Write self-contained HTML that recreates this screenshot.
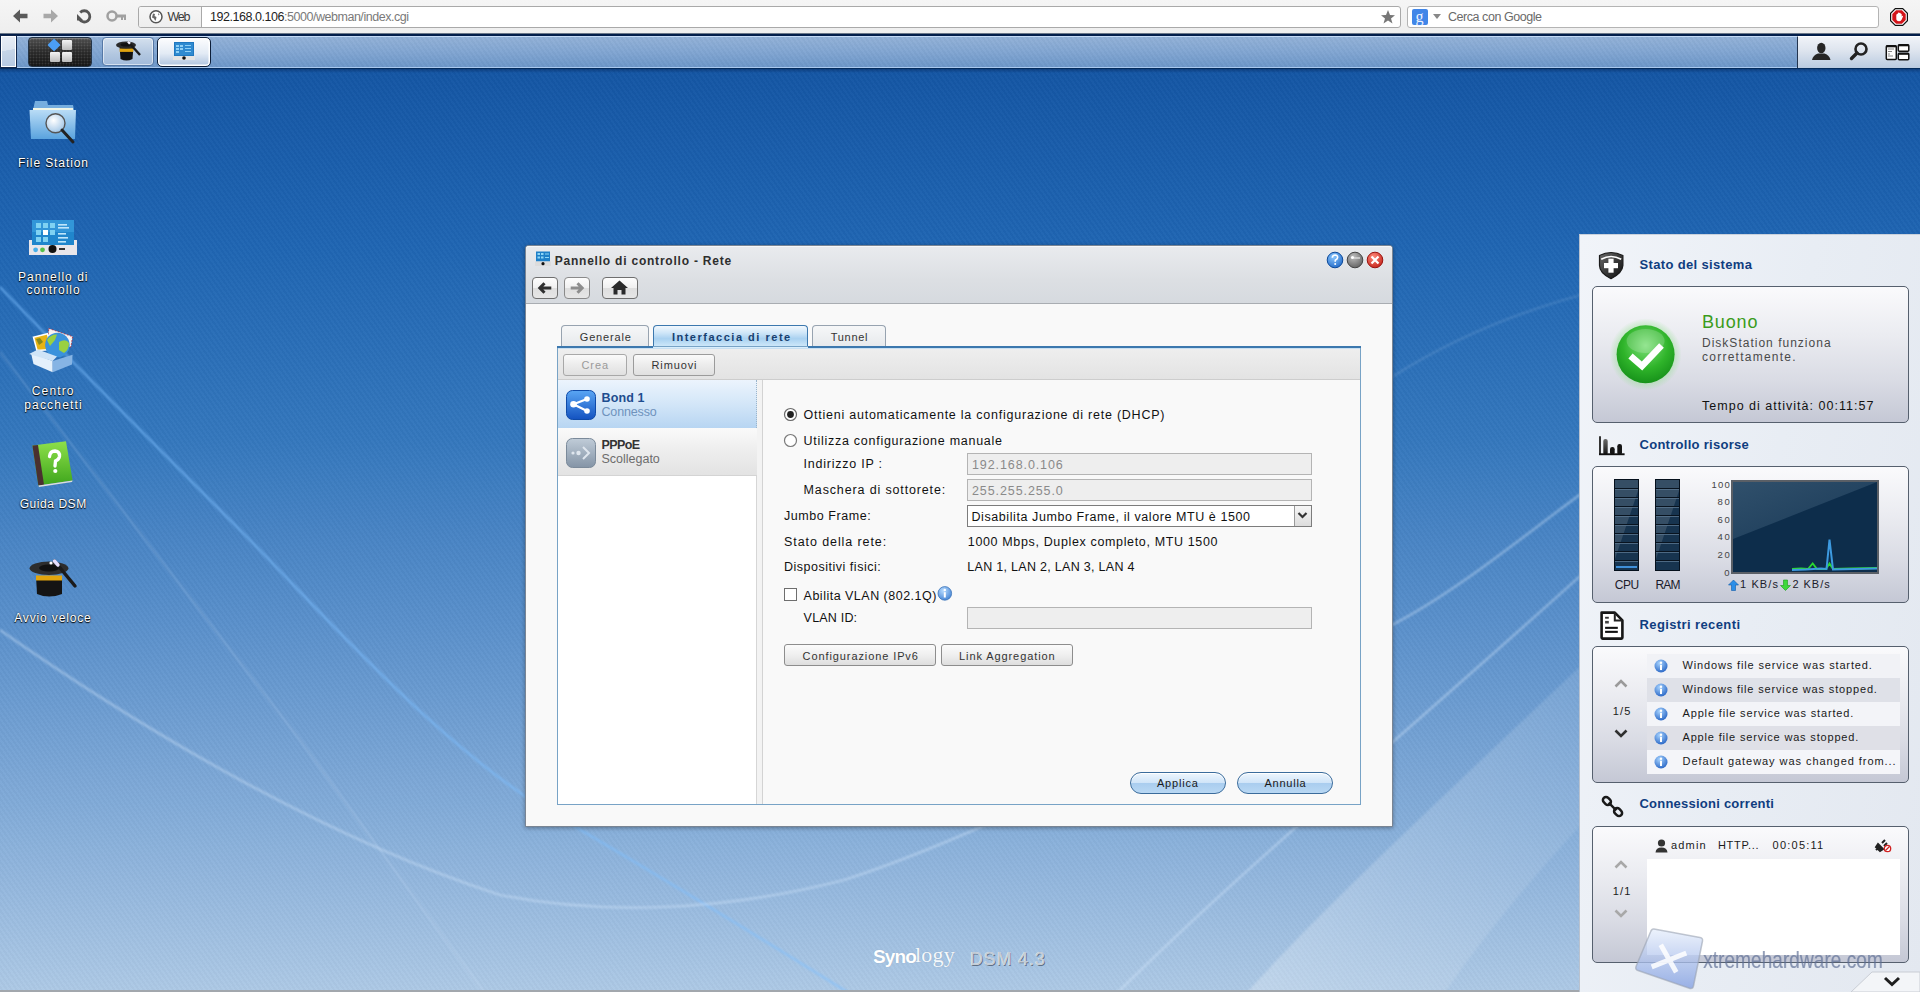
<!DOCTYPE html>
<html><head><meta charset="utf-8">
<style>

*{margin:0;padding:0;box-sizing:border-box}
html,body{width:1920px;height:992px;overflow:hidden;font-family:"Liberation Sans",sans-serif;}
body{position:relative;background:#1a5aa6;}
.a{position:absolute}
svg.a{overflow:visible}
.t{position:absolute;white-space:pre;line-height:1}
#desk{left:0;top:69px;width:1920px;height:923px;overflow:hidden;
 background:linear-gradient(180deg,#1456a4 0%,#2066b3 20%,#3477bd 40%,#5a90cb 60%,#82abd8 80%,#adc9e5 100%);}
#stripes{left:0;top:0;width:1920px;height:923px;
 background:repeating-linear-gradient(55deg,rgba(255,255,255,0.018) 0 2px,rgba(0,0,0,0.018) 2px 4px);}
#browser{left:0;top:0;width:1920px;height:34px;background:linear-gradient(#f5f5f5,#eeeeee);}
#taskbar{left:0;top:33px;width:1920px;height:36px;background:repeating-linear-gradient(55deg,rgba(255,255,255,.025) 0 2px,rgba(0,0,0,.02) 2px 4px),linear-gradient(#96b3d8,#82a6d2 50%,#6a95c8);}
.dl{color:#fff;text-shadow:0 1px 1px #000,0 0 2px rgba(0,0,0,.7)}

</style></head><body>
<div id="browser" class="a">
<svg class="a" style="left:10px;top:7px;" width="20" height="18" viewBox="0 0 20 18"><path d="M3 9 L10 2.5 L10 6.8 L17.5 6.8 L17.5 11.2 L10 11.2 L10 15.5 Z" fill="#5a5a5a"/></svg>
<svg class="a" style="left:41px;top:7px;" width="20" height="18" viewBox="0 0 20 18"><path d="M17 9 L10 2.5 L10 6.8 L2.5 6.8 L2.5 11.2 L10 11.2 L10 15.5 Z" fill="#a8a8a8"/></svg>
<svg class="a" style="left:75px;top:7px;" width="18" height="18" viewBox="0 0 18 18"><path d="M5.2 5.5 A5.6 5.6 0 1 1 4.6 12.5" fill="none" stroke="#555" stroke-width="2.8"/><path d="M2 13.5 L2 7 L8.5 13.5 Z" fill="#555"/></svg>
<svg class="a" style="left:106px;top:9px;" width="22" height="14" viewBox="0 0 22 14"><circle cx="6" cy="7" r="4.5" fill="none" stroke="#a0a0a0" stroke-width="2.5"/><rect x="10" y="5.5" width="10" height="3" fill="#a0a0a0"/><rect x="15" y="8" width="2" height="3" fill="#a0a0a0"/><rect x="18" y="8" width="2" height="3" fill="#a0a0a0"/></svg>
<div class="a" style="left:138px;top:6px;width:1263px;height:22px;background:#fff;border:1px solid #a9a9a9;border-radius:3px"></div>
<div class="a" style="left:139px;top:7px;width:63px;height:20px;background:linear-gradient(#f6f6f6,#eeeeee);border-right:1px solid #a9a9a9;border-radius:2px 0 0 2px"></div>
<svg class="a" style="left:149px;top:10px;" width="14" height="14" viewBox="0 0 14 14"><circle cx="7" cy="6.8" r="6" fill="#fff" stroke="#555" stroke-width="1.5"/><path d="M4 3.5 L6 4 L5.5 6 L7.5 7 L7 9.5 L6.2 11 L5 8.5 L3 7.5 Z M9 3 L10.5 4.5 L9.5 5.5 Z" fill="#6a6a6a"/></svg>
<span class="t" style="left:167.5px;top:11.02px;font-size:12.5px;color:#3a3a3a;letter-spacing:-1.242px;">Web</span>
<span class="t" style="left:210px;top:11.02px;font-size:12.5px;color:#1e1e1e;letter-spacing:-0.463px;">192.168.0.106<span style="color:#7a7a7a">:5000/webman/index.cgi</span></span>
<svg class="a" style="left:1380px;top:9px;" width="16" height="16" viewBox="0 0 16 16"><path d="M8 1 L10 6 L15 6.2 L11 9.5 L12.5 14.5 L8 11.5 L3.5 14.5 L5 9.5 L1 6.2 L6 6 Z" fill="#777"/></svg>
<div class="a" style="left:1407px;top:6px;width:472px;height:22px;background:#fff;border:1px solid #b4b4b4;border-radius:3px"></div>
<div class="a" style="left:1412px;top:9px;width:16px;height:16px;background:#4186e8;border-radius:2px"></div>
<span class="t" style="left:1415.5px;top:8.86px;font-size:16px;color:#eef4ff;font-family:'Liberation Serif',serif;">g</span>
<svg class="a" style="left:1433px;top:14px;" width="8" height="6" viewBox="0 0 8 6"><path d="M0 0 L8 0 L4 5 Z" fill="#888"/></svg>
<span class="t" style="left:1448px;top:11.02px;font-size:12.5px;color:#6a6a6a;letter-spacing:-0.451px;">Cerca con Google</span>
<svg class="a" style="left:1890px;top:8px;" width="18" height="18" viewBox="0 0 18 18"><path d="M5.3 0.6 L12.7 0.6 L17.4 5.3 L17.4 12.7 L12.7 17.4 L5.3 17.4 L0.6 12.7 L0.6 5.3 Z" fill="#fff" stroke="#111" stroke-width="1.2"/><path d="M6.1 2.3 L11.9 2.3 L15.7 6.1 L15.7 11.9 L11.9 15.7 L6.1 15.7 L2.3 11.9 L2.3 6.1 Z" fill="#d3141a"/><path d="M6.3 7.2 Q6.4 5.8 7.4 5.9 L7.7 5.9 L7.8 4.9 Q8.4 4.2 9 4.8 L9.2 5 Q9.9 4.3 10.5 5 L10.7 5.8 Q11.5 5.5 11.7 6.3 L11.7 8.4 L12.4 7.7 Q13.2 7.6 13 8.5 L11.6 11.8 Q10.6 13.3 9 13.3 Q6.3 13.2 6.3 10.6 Z" fill="#fff"/></svg>
</div>
<div id="taskbar" class="a">
<div class="a" style="left:0px;top:0px;width:1920px;height:1px;background:#6b7788"></div>
<div class="a" style="left:0px;top:1px;width:1920px;height:2px;background:#021d4a"></div>
<div class="a" style="left:0px;top:3px;width:1920px;height:1px;background:#c4daf6"></div>
<div class="a" style="left:0px;top:34px;width:1920px;height:1px;background:#a9c8ee"></div>
<div class="a" style="left:0px;top:35px;width:1920px;height:1px;background:#032b5c"></div>
<div class="a" style="left:0px;top:2px;width:17px;height:33px;background:#10254a"></div>
<div class="a" style="left:1px;top:3px;width:15px;height:31px;background:linear-gradient(170deg,#e9eef6 0%,#dbe4f0 45%,#c6d5e8 46%,#b6c9e2 100%);border:1px solid #fff"></div>
<div class="a" style="left:28px;top:4px;width:64px;height:30px;border-radius:4px;background:radial-gradient(circle,rgba(255,255,255,.12) 0.8px,transparent 1.1px) 0 0/3px 3px,linear-gradient(#4e4e4e,#2a2a2a 50%,#161616);border:1px solid #243447;box-shadow:inset 0 1px 0 rgba(255,255,255,.25)"></div>
<div class="a" style="left:49px;top:7px;width:10px;height:10px;background:#4b9ef5;transform:rotate(45deg) scale(.92);border-radius:1px"></div>
<div class="a" style="left:62px;top:7px;width:10px;height:10px;background:linear-gradient(#f4f4f4,#bcbcbc);border-radius:1px"></div>
<div class="a" style="left:50px;top:19px;width:10px;height:10px;background:linear-gradient(#f4f4f4,#bcbcbc);border-radius:1px"></div>
<div class="a" style="left:62px;top:19px;width:10px;height:10px;background:linear-gradient(#f4f4f4,#bcbcbc);border-radius:1px"></div>
<div class="a" style="left:102px;top:4px;width:52px;height:29px;border-radius:4px;border:1px solid #5578a6;background:linear-gradient(#d4e0ee,#b2c7e0 60%,#a2bada);box-shadow:inset 0 0 0 1px rgba(255,255,255,.55)"></div>
<svg class="a" style="left:114px;top:7px;" width="28" height="24" viewBox="0 0 28 24"><path d="M5.5 5 L6.5 19 Q12.5 22 18.5 19 L19.5 5 Z" fill="#121212"/><rect x="5.7" y="8.5" width="13.6" height="3.4" fill="#e0a410"/><ellipse cx="12" cy="5" rx="10" ry="3.6" fill="#2a2a2a"/><ellipse cx="12" cy="4.8" rx="5.5" ry="1.8" fill="#111"/><path d="M14 1.5 L26 15" stroke="#1a1a1a" stroke-width="2.4"/><path d="M14 1.5 L16 3.8" stroke="#f0f0ff" stroke-width="2.4"/></svg>
<div class="a" style="left:157px;top:4px;width:54px;height:30px;border-radius:5px;border:1.5px solid #0d1e38;background:linear-gradient(#fdfdfe,#e3ebf5 55%,#aec3de);box-shadow:inset 0 0 0 1.5px #fff"></div>
<svg class="a" style="left:172px;top:8px;" width="24" height="22" viewBox="0 0 24 22"><rect x="2" y="1" width="20" height="14" fill="#1f78c0"/><rect x="3" y="2" width="18" height="12" fill="#2f8ad0"/><g fill="#8fd0f5"><rect x="4" y="4" width="3" height="2"/><rect x="8" y="4" width="3" height="2"/><rect x="4" y="7" width="3" height="2"/><rect x="8" y="7" width="3" height="2"/><rect x="4" y="10" width="3" height="2"/><rect x="13" y="4" width="6" height="1"/><rect x="13" y="7" width="6" height="1"/><rect x="13" y="10" width="6" height="1"/></g><rect x="1" y="15" width="22" height="4" fill="#e4e4e4"/><circle cx="12" cy="17" r="1.8" fill="#111"/></svg>
<div class="a" style="left:1797px;top:3px;width:123px;height:32px;background:linear-gradient(#f0f3f8,#dde4ee 45%,#b9cae0);border-left:1px solid #23354f;border-top:1px solid #fff"></div>
<svg class="a" style="left:1811px;top:8px;" width="20" height="20" viewBox="0 0 20 20"><ellipse cx="10.3" cy="7" rx="4.2" ry="5.2" fill="#262626"/><path d="M1 19 Q2 14 7 12.5 L13.5 12.5 Q18.5 14 19.5 19 Z" fill="#262626"/></svg>
<svg class="a" style="left:1849px;top:8px;" width="20" height="20" viewBox="0 0 20 20"><circle cx="12" cy="8" r="5.5" fill="none" stroke="#222" stroke-width="2.6"/><path d="M8 12 L2.5 17.5" stroke="#222" stroke-width="3.4" stroke-linecap="round"/></svg>
<svg class="a" style="left:1885px;top:11px;" width="25" height="18" viewBox="0 0 25 18"><rect x="1.3" y="1.8" width="10" height="13.8" rx="1" fill="#fff" stroke="#111" stroke-width="1.5"/><rect x="1.3" y="1.3" width="10" height="2" fill="#111"/><rect x="13.3" y="0.8" width="10.5" height="6.4" rx="1" fill="#fff" stroke="#111" stroke-width="1.5"/><rect x="13.3" y="0.5" width="10.5" height="1.8" fill="#111"/><rect x="13.3" y="9.3" width="10.5" height="6.4" rx="1" fill="#fff" stroke="#111" stroke-width="1.5"/><rect x="13.3" y="9" width="10.5" height="1.8" fill="#111"/><path d="M3 5h6M3 7.5h4M3 10h2M3 12h5" stroke="#555" stroke-width=".7"/></svg>
</div>
<div id="desk" class="a"><div id="stripes" class="a"></div>
<svg class="a" style="left:0;top:-69px" width="1920" height="1061" viewBox="0 0 1920 1061">
<defs>
<linearGradient id="band" x1="0" y1="0" x2="1" y2="0.3"><stop offset="0" stop-color="#fff" stop-opacity="0.38"/><stop offset="0.45" stop-color="#fff" stop-opacity="0.16"/><stop offset="1" stop-color="#fff" stop-opacity="0"/></linearGradient>
<filter id="bl" x="-10%" y="-10%" width="120%" height="120%"><feGaussianBlur stdDeviation="0.9"/></filter>
<filter id="bl2" x="-10%" y="-10%" width="120%" height="120%"><feGaussianBlur stdDeviation="3"/></filter>
</defs>
<g fill="none" stroke="#dcecff" filter="url(#bl)">
<path d="M0,287 C70,360 150,440 240,530 C330,620 450,760 574,826 C700,900 780,950 860,1000" stroke="#7fc0ff" stroke-opacity="0.6" stroke-width="2.4"/>
<path d="M0,352 C100,480 200,610 300,740 C380,850 430,920 490,1000" stroke-opacity="0.2" stroke-width="1.8"/>
<path d="M0,630 C150,735 330,840 500,895 C600,915 720,912 844,880 C1000,830 1200,720 1392,625 C1460,590 1530,530 1600,480" stroke-opacity="0.42" stroke-width="2.2"/>
<path d="M1100,1010 C1250,860 1400,740 1620,540" stroke-opacity="0.42" stroke-width="2.2"/>
<path d="M1392,377 C1450,340 1520,310 1600,290" stroke-opacity="0.18" stroke-width="1.6"/>
</g>
<path d="M1240,1000 C1330,900 1440,800 1650,600 L1800,600 C1640,760 1520,880 1440,1000 Z" fill="url(#band)" filter="url(#bl)"/>
</svg>
<div class="a" style="left:0px;top:0px;width:1920px;height:4px;background:linear-gradient(rgba(0,20,60,.35),rgba(0,20,60,0))"></div>
</div>
<svg class="a" style="left:28px;top:100px;" width="50" height="46" viewBox="0 0 50 46">
<defs><linearGradient id="fo" x1="0" y1="0" x2="0" y2="1"><stop offset="0" stop-color="#b9dcf6"/><stop offset="1" stop-color="#5aa3de"/></linearGradient>
<radialGradient id="gl" cx="0.4" cy="0.35" r="0.7"><stop offset="0" stop-color="#fff"/><stop offset="1" stop-color="#9ec4e6"/></radialGradient></defs>
<path d="M7 1 L19 1 L20 5 L45 5 L46 10 L5 10 Z" fill="#76aedf"/>
<rect x="5" y="8" width="40" height="5" fill="#f2f6e6"/>
<path d="M1.5 10 L48 10 L47 39 L3 39 Z" fill="url(#fo)"/>
<circle cx="27.5" cy="23.3" r="9.5" fill="url(#gl)" stroke="#555" stroke-width="1.4"/>
<path d="M34 30 L45 42" stroke="#222" stroke-width="3" stroke-linecap="round"/>
</svg>
<svg class="a" style="left:28px;top:218px;" width="50" height="40" viewBox="0 0 50 40">
<rect x="4" y="2" width="42" height="25" fill="#2086cc"/>
<rect x="4" y="2" width="42" height="12" fill="#3fa2e0" opacity=".6"/>
<g fill="#7fd2f2"><rect x="8" y="5" width="5" height="5"/><rect x="15" y="5" width="5" height="5"/><rect x="22" y="5" width="5" height="5"/><rect x="8" y="12" width="5" height="5"/><rect x="22" y="12" width="5" height="5"/><rect x="8" y="19" width="5" height="5"/><rect x="15" y="19" width="5" height="5"/></g>
<rect x="15" y="12" width="5" height="5" fill="#fff"/>
<g fill="#bfe6fa"><rect x="30" y="6" width="9" height="1.6"/><rect x="30" y="9" width="11" height="1.6"/><rect x="30" y="15" width="8" height="1.6"/><rect x="30" y="19" width="10" height="1.6"/><rect x="30" y="23" width="8" height="1.6"/></g>
<path d="M1 22 L4 22 L4 27 L46 27 L46 22 L49 22 L49 37 L1 37 Z" fill="#e9e6ea"/>
<circle cx="7.6" cy="31.8" r="2.4" fill="#48aee8"/><circle cx="14.5" cy="31.8" r="2.4" fill="#55c04a"/>
<circle cx="24.5" cy="31" r="4" fill="#111"/><rect x="31" y="30" width="6" height="2" fill="#333"/>
</svg>
<svg class="a" style="left:28px;top:326px;" width="50" height="50" viewBox="0 0 50 50">
<path d="M20.7 2.4 L44.6 10.6 L42.9 21 L20 20 Z" fill="#f8f2f2" stroke="#b03040" stroke-width=".9" stroke-dasharray="1.6 1.6"/>
<path d="M5.5 11.2 L19.5 7.7 L23.6 23.5 L9 24.5 Z" fill="#e8b414" stroke="#fff" stroke-width="1.6"/>
<path d="M8 13 L12 12 L15 16 L11 19 Z" fill="#4a6a20" opacity=".6"/>
<circle cx="29.4" cy="19" r="12.3" fill="#3a92dc"/>
<path d="M19 14 Q23 8 29 8.5 L27 14 L22 20 Z M31 16 Q38 12 41 17 Q41 24 36 27 L31 24 Z" fill="#9ad040"/>
<path d="M3 27 L24.7 35 L24.7 46.3 L5.5 38 Z" fill="#e4f0fb"/>
<path d="M24.7 35 L44.6 28.7 L44 38.5 L24.7 46.3 Z" fill="#86b4e4"/>
<path d="M1 28 L10 23.5 L29 30.5 L24.7 35 Z" fill="#cfe4f7"/>
</svg>
<svg class="a" style="left:30px;top:439px;" width="46" height="50" viewBox="0 0 46 50">
<defs><linearGradient id="bk" x1="0" y1="0" x2="0" y2="1"><stop offset="0" stop-color="#8ee04a"/><stop offset="1" stop-color="#3ea51c"/></linearGradient></defs>
<path d="M2.4 6.6 L36 2.3 L42.6 41.4 L8.4 46.6 Z" fill="url(#bk)"/>
<path d="M2.4 6.6 L8 5.9 L14 45.8 L8.4 46.6 Z" fill="#4a3030"/>
<path d="M8.4 46.6 L42.6 41.4 L42 43 L9 48 Z" fill="#ddd"/>
<path d="M19.5 17.5 Q20 12 25 12 Q30 12.5 29.5 17.5 Q29 20.5 25.5 22 L25 27" fill="none" stroke="#fff" stroke-width="3.3" stroke-linecap="round"/>
<circle cx="25.3" cy="32" r="2.1" fill="#fff"/>
</svg>
<svg class="a" style="left:27px;top:556px;" width="52" height="46" viewBox="0 0 52 46">
<path d="M9 20 L10 38 Q22 43 35 38 L35 20 Z" fill="#141414"/>
<rect x="9" y="19.5" width="26" height="5" fill="#e2a40c"/>
<ellipse cx="22" cy="12.3" rx="19.4" ry="6.7" fill="#2d2d2d"/>
<ellipse cx="22" cy="12" rx="10" ry="3.5" fill="#111"/>
<path d="M27.4 5 L48 30" stroke="#1b1b1b" stroke-width="3.4" stroke-linecap="round"/>
<path d="M27.4 5 L31 9" stroke="#e8e0ff" stroke-width="3.4" stroke-linecap="round"/>
<circle cx="24" cy="7" r="1.6" fill="#fff"/>
</svg>
<span class="t" style="left:18px;top:156.74px;font-size:12px;color:#fff;letter-spacing:0.906px;text-shadow:0 1px 1px #000,0 0 2px rgba(0,0,0,.75);">File Station</span>
<span class="t" style="left:18px;top:271.04px;font-size:12px;color:#fff;letter-spacing:1.011px;text-shadow:0 1px 1px #000,0 0 2px rgba(0,0,0,.75);">Pannello di</span>
<span class="t" style="left:26.6px;top:284.24px;font-size:12px;color:#fff;letter-spacing:0.955px;text-shadow:0 1px 1px #000,0 0 2px rgba(0,0,0,.75);">controllo</span>
<span class="t" style="left:31.8px;top:384.74px;font-size:12px;color:#fff;letter-spacing:1.134px;text-shadow:0 1px 1px #000,0 0 2px rgba(0,0,0,.75);">Centro</span>
<span class="t" style="left:24.2px;top:398.74px;font-size:12px;color:#fff;letter-spacing:1.184px;text-shadow:0 1px 1px #000,0 0 2px rgba(0,0,0,.75);">pacchetti</span>
<span class="t" style="left:19.7px;top:498.44px;font-size:12px;color:#fff;letter-spacing:0.559px;text-shadow:0 1px 1px #000,0 0 2px rgba(0,0,0,.75);">Guida DSM</span>
<span class="t" style="left:14.2px;top:612.44px;font-size:12px;color:#fff;letter-spacing:0.859px;text-shadow:0 1px 1px #000,0 0 2px rgba(0,0,0,.75);">Avvio veloce</span>
<span class="t" style="left:873px;top:946.52px;font-size:19px;color:#fff;font-weight:bold;letter-spacing:-0.9px;text-shadow:0 0 1px rgba(0,0,0,.2);">Syno</span>
<span class="t" style="left:915px;top:943.98px;font-size:22px;color:#f4f8fc;font-family:'Liberation Serif',serif;letter-spacing:0.2px;text-shadow:0 0 1px rgba(0,0,0,.2);">logy</span>
<span class="t" style="left:970px;top:949.66px;font-size:18px;color:#c3ccd6;letter-spacing:0.828px;text-shadow:-0.5px -0.5px 0 rgba(255,255,255,.8),0.7px 0.7px 0.5px #5f6f84;">DSM 4.3</span>
<div class="a" style="left:525px;top:245px;width:868px;height:582px;background:#7a8593;border-radius:4px 4px 1px 1px;box-shadow:0 1px 4px rgba(0,0,0,.35)"></div>
<div class="a" style="left:526px;top:246px;width:866px;height:580px;background:#f9f9f9;border-radius:3px 3px 0 0"></div>
<div class="a" style="left:526px;top:246px;width:866px;height:58px;background:linear-gradient(#e9ebee,#dcdfe3 60%,#d6dadf);border-radius:3px 3px 0 0;border-bottom:1px solid #a9adb2;box-shadow:inset 0 1px 0 #f6f7f8"></div>
<svg class="a" style="left:535px;top:251px;" width="16" height="16" viewBox="0 0 16 16"><rect x="1" y="0.5" width="14" height="10" fill="#1f80c8"/><g fill="#8fd6f6"><rect x="2.5" y="2" width="2.5" height="2"/><rect x="6" y="2" width="2.5" height="2"/><rect x="2.5" y="5.5" width="2.5" height="2"/><rect x="6" y="5.5" width="2.5" height="2"/><rect x="10" y="2.5" width="4" height="1"/><rect x="10" y="6" width="4" height="1"/></g><rect x="0" y="10.5" width="16" height="4.5" fill="#dcdcdc"/><circle cx="8" cy="12.7" r="1.6" fill="#111"/></svg>
<span class="t" style="left:554.7px;top:254.64px;font-size:12px;color:#2e2e2e;font-weight:bold;letter-spacing:0.784px;">Pannello di controllo - Rete</span>
<svg class="a" style="left:1326px;top:251px;" width="60" height="18" viewBox="0 0 60 18">
<defs>
<radialGradient id="wb1" cx=".4" cy=".3" r=".8"><stop offset="0" stop-color="#8cc8ff"/><stop offset="1" stop-color="#1b64c4"/></radialGradient>
<radialGradient id="wb2" cx=".4" cy=".3" r=".8"><stop offset="0" stop-color="#bdbdbd"/><stop offset="1" stop-color="#5a5a5a"/></radialGradient>
<radialGradient id="wb3" cx=".4" cy=".3" r=".8"><stop offset="0" stop-color="#ff8a7a"/><stop offset="1" stop-color="#c01c14"/></radialGradient>
</defs>
<circle cx="9" cy="9" r="7.8" fill="url(#wb1)" stroke="#0d4a9a" stroke-width="1"/>
<path d="M6.3 6.8 Q6.5 4 9 4 Q11.8 4.2 11.6 6.6 Q11.4 8.2 9.3 9.2 L9.2 10.8" fill="none" stroke="#fff" stroke-width="1.6"/><circle cx="9.2" cy="13" r="1" fill="#fff"/>
<circle cx="29" cy="9" r="7.8" fill="url(#wb2)" stroke="#444" stroke-width="1"/><circle cx="26.5" cy="6.5" r="1.6" fill="#fff"/><path d="M28 7 L34 7" stroke="#ddd" stroke-width="1.4"/>
<circle cx="49" cy="9" r="7.8" fill="url(#wb3)" stroke="#9a1410" stroke-width="1"/>
<path d="M45.5 5.5 L52.5 12.5 M52.5 5.5 L45.5 12.5" stroke="#fff" stroke-width="2.2"/>
</svg>
<div class="a" style="left:532px;top:277px;width:26px;height:22px;border:1px solid #6f6f6f;border-radius:4px;background:linear-gradient(#fdfdfd,#f0f0f0 50%,#dedede 51%,#e6e6e6);"></div>
<div class="a" style="left:564px;top:277px;width:26px;height:22px;border:1px solid #6f6f6f;border-radius:4px;background:linear-gradient(#fdfdfd,#f0f0f0 50%,#dedede 51%,#e6e6e6);border-color:#8a8a8a"></div>
<div class="a" style="left:602px;top:277px;width:36px;height:22px;border:1px solid #6f6f6f;border-radius:4px;background:linear-gradient(#fdfdfd,#f0f0f0 50%,#dedede 51%,#e6e6e6);"></div>
<svg class="a" style="left:538px;top:282px;" width="14" height="12" viewBox="0 0 14 12"><path d="M6.5 1.2 L1.8 6 L6.5 10.8 M2.5 6 L13.3 6" fill="none" stroke="#2f2f2f" stroke-width="3"/></svg>
<svg class="a" style="left:570px;top:282px;" width="14" height="12" viewBox="0 0 14 12"><path d="M7.5 1.2 L12.2 6 L7.5 10.8 M11.5 6 L0.7 6" fill="none" stroke="#8d8d8d" stroke-width="3"/></svg>
<svg class="a" style="left:611px;top:280px;" width="17" height="15" viewBox="0 0 17 15"><path d="M8.5 0.5 L17 8 L14.5 8 L14.5 14.5 L10.5 14.5 L10.5 10 L6.5 10 L6.5 14.5 L2.5 14.5 L2.5 8 L0 8 Z" fill="#2a2a2a"/></svg>
<div class="a" style="left:561px;top:325px;width:88px;height:22px;border:1px solid #97a3b0;border-bottom:none;border-radius:4px 4px 0 0;background:linear-gradient(#f6f7f8,#e6e9ec);"></div>
<div class="a" style="left:812px;top:325px;width:74px;height:22px;border:1px solid #97a3b0;border-bottom:none;border-radius:4px 4px 0 0;background:linear-gradient(#f6f7f8,#e6e9ec);"></div>
<div class="a" style="left:653px;top:325px;width:155px;height:24px;border:1px solid #3c78ae;border-bottom:none;border-radius:4px 4px 0 0;background:linear-gradient(#f2f8fd,#cfe6f8 30%,#a9d1f0 55%,#c5e2f7 80%,#d9eefc)"></div>
<span class="t" style="left:579.8px;top:331.59px;font-size:11px;color:#333;letter-spacing:0.819px;">Generale</span>
<span class="t" style="left:671.9px;top:331.59px;font-size:11px;color:#17406f;font-weight:bold;letter-spacing:1.511px;">Interfaccia di rete</span>
<span class="t" style="left:830.8px;top:331.59px;font-size:11px;color:#333;letter-spacing:0.693px;">Tunnel</span>
<div class="a" style="left:557px;top:346px;width:804px;height:459px;border:1px solid #78a3c6;background:#f9f9f9"></div>
<div class="a" style="left:557px;top:346px;width:96px;height:2px;background:#3c78ae"></div>
<div class="a" style="left:808px;top:346px;width:553px;height:2px;background:#3c78ae"></div>
<div class="a" style="left:653px;top:347px;width:155px;height:2px;background:#d9eefc"></div>
<div class="a" style="left:558px;top:348px;width:802px;height:1px;background:#c9e0f2"></div>
<div class="a" style="left:558px;top:349px;width:802px;height:31px;background:linear-gradient(#eeeeee,#e3e3e3);border-bottom:1px solid #cdcdcd"></div>
<div class="a" style="left:563px;top:354px;width:64px;height:22px;border:1px solid #9b9b9b;border-radius:3px;background:linear-gradient(#fafafa,#ececec 50%,#e0e0e0);border-color:#a8a8a8"></div>
<div class="a" style="left:633px;top:354px;width:82px;height:22px;border:1px solid #9b9b9b;border-radius:3px;background:linear-gradient(#fafafa,#ececec 50%,#e0e0e0);"></div>
<span class="t" style="left:581.5px;top:360.29px;font-size:11px;color:#9a9a9a;letter-spacing:0.885px;">Crea</span>
<span class="t" style="left:651.5px;top:360.29px;font-size:11px;color:#333;letter-spacing:0.878px;">Rimuovi</span>
<div class="a" style="left:558px;top:380px;width:199px;height:424px;background:#fff;border-right:1px solid #d6d6d6"></div>
<div class="a" style="left:757px;top:380px;width:6px;height:424px;background:#f3f3f3;border-right:1px solid #d3d3d3"></div>
<div class="a" style="left:558px;top:380px;width:199px;height:48px;background:linear-gradient(#ecf4fd,#d3e6f8 50%,#b7d5f2);border-right:1px dotted #9bb5cc"></div>
<div class="a" style="left:558px;top:428px;width:199px;height:48px;background:linear-gradient(#fafafa,#ededed 50%,#e3e3e3);border-bottom:1px solid #d4d4d4"></div>
<svg class="a" style="left:566px;top:390px;" width="30" height="30" viewBox="0 0 30 30">
<defs><linearGradient id="ib" x1="0" y1="0" x2="0" y2="1"><stop offset="0" stop-color="#5aa6f4"/><stop offset="1" stop-color="#1352c0"/></linearGradient>
<linearGradient id="ig" x1="0" y1="0" x2="0" y2="1"><stop offset="0" stop-color="#c0ccd8"/><stop offset="1" stop-color="#8494a6"/></linearGradient></defs>
<rect x="0.5" y="0.5" width="29" height="29" rx="6" fill="url(#ib)" stroke="#0f4aa8"/>
<path d="M7.5 14.2 L21 9 M7.5 14.2 L21 21" stroke="#fff" stroke-width="2.2"/>
<circle cx="7.5" cy="14.2" r="3.3" fill="#fff"/><circle cx="21" cy="9" r="2.8" fill="#fff"/><circle cx="21" cy="21" r="2.8" fill="#fff"/>
</svg>
<svg class="a" style="left:566px;top:438px;" width="30" height="30" viewBox="0 0 30 30">
<rect x="0.5" y="0.5" width="29" height="29" rx="6" fill="url(#ig)" stroke="#7b8a9a"/>
<circle cx="7" cy="15" r="1.6" fill="#dfe6ee"/><circle cx="12.5" cy="15" r="2.2" fill="#dfe6ee"/>
<path d="M17 9 L23 15 L17 21" fill="none" stroke="#dfe6ee" stroke-width="2"/>
</svg>
<span class="t" style="left:601.5px;top:391.62px;font-size:12.5px;color:#1e4d8f;font-weight:bold;letter-spacing:0.128px;">Bond 1</span>
<span class="t" style="left:601.5px;top:405.72px;font-size:12.5px;color:#6f93bd;letter-spacing:-0.157px;">Connesso</span>
<span class="t" style="left:601.5px;top:438.82px;font-size:12.5px;color:#333;font-weight:bold;letter-spacing:-0.575px;">PPPoE</span>
<span class="t" style="left:601.5px;top:452.82px;font-size:12.5px;color:#6d6d6d;letter-spacing:-0.008px;">Scollegato</span>
<svg class="a" style="left:783px;top:407px;" width="15" height="15" viewBox="0 0 15 15"><circle cx="7.5" cy="7.5" r="6" fill="#fff" stroke="#6a6a6a" stroke-width="1.2"/><circle cx="7.5" cy="7.5" r="3.4" fill="#202020"/></svg>
<svg class="a" style="left:783px;top:433px;" width="15" height="15" viewBox="0 0 15 15"><circle cx="7.5" cy="7.5" r="6" fill="#fff" stroke="#7a7a7a" stroke-width="1.2"/></svg>
<span class="t" style="left:803.5px;top:409.07px;font-size:12.5px;color:#111;letter-spacing:0.765px;">Ottieni automaticamente la configurazione di rete (DHCP)</span>
<span class="t" style="left:803.5px;top:435.02px;font-size:12.5px;color:#111;letter-spacing:0.734px;">Utilizza configurazione manuale</span>
<span class="t" style="left:803.6px;top:458.42px;font-size:12.5px;color:#111;letter-spacing:0.757px;">Indirizzo IP :</span>
<span class="t" style="left:803.6px;top:484.42px;font-size:12.5px;color:#111;letter-spacing:0.854px;">Maschera di sottorete:</span>
<span class="t" style="left:784px;top:510.22px;font-size:12.5px;color:#111;letter-spacing:0.555px;">Jumbo Frame:</span>
<span class="t" style="left:784px;top:536.12px;font-size:12.5px;color:#111;letter-spacing:0.915px;">Stato della rete:</span>
<span class="t" style="left:784px;top:561.02px;font-size:12.5px;color:#111;letter-spacing:0.510px;">Dispositivi fisici:</span>
<span class="t" style="left:803.6px;top:589.52px;font-size:12.5px;color:#111;letter-spacing:0.491px;">Abilita VLAN (802.1Q)</span>
<span class="t" style="left:803.6px;top:611.82px;font-size:12.5px;color:#111;letter-spacing:0.199px;">VLAN ID:</span>
<div class="a" style="left:967px;top:453px;width:345px;height:22px;background:#eeeeee;border:1px solid #b4b4b4;"></div>
<div class="a" style="left:967px;top:479px;width:345px;height:22px;background:#eeeeee;border:1px solid #b4b4b4;"></div>
<div class="a" style="left:967px;top:607px;width:345px;height:22px;background:#eeeeee;border:1px solid #b4b4b4;"></div>
<div class="a" style="left:967px;top:505px;width:345px;height:22px;background:#fff;border:1px solid #7c7c7c"></div>
<div class="a" style="left:1294px;top:506px;width:17px;height:20px;background:linear-gradient(#f6f6f6,#dcdcdc);border-left:1px solid #9a9a9a"></div>
<svg class="a" style="left:1297px;top:511px;" width="11" height="9" viewBox="0 0 11 9"><path d="M1.5 2 L5.5 6 L9.5 2" fill="none" stroke="#333" stroke-width="2.2"/></svg>
<span class="t" style="left:972px;top:459.02px;font-size:12.5px;color:#8a8a8a;letter-spacing:0.904px;">192.168.0.106</span>
<span class="t" style="left:972px;top:485.02px;font-size:12.5px;color:#8a8a8a;letter-spacing:0.904px;">255.255.255.0</span>
<span class="t" style="left:971.5px;top:511.12px;font-size:12.5px;color:#111;letter-spacing:0.580px;">Disabilita Jumbo Frame, il valore MTU è 1500</span>
<span class="t" style="left:967.8px;top:536.12px;font-size:12.5px;color:#111;letter-spacing:0.643px;">1000 Mbps, Duplex completo, MTU 1500</span>
<span class="t" style="left:967.3px;top:561.02px;font-size:12.5px;color:#111;letter-spacing:0.295px;">LAN 1, LAN 2, LAN 3, LAN 4</span>
<div class="a" style="left:784px;top:588px;width:13px;height:13px;background:#fff;border:1px solid #6e6e6e"></div>
<svg class="a" style="left:937px;top:586px;" width="15" height="15" viewBox="0 0 15 15"><defs><radialGradient id="inf" cx=".4" cy=".3" r=".8"><stop offset="0" stop-color="#b8dcff"/><stop offset="1" stop-color="#3a7cd0"/></radialGradient></defs><circle cx="7.8" cy="7.4" r="6.8" fill="url(#inf)" stroke="#3c74b8" stroke-width=".8"/><circle cx="7.8" cy="4" r="1.2" fill="#fff"/><path d="M7.8 6.2 L7.8 11.5" stroke="#fff" stroke-width="2"/></svg>
<div class="a" style="left:784px;top:644px;width:152px;height:22px;border:1px solid #8d8d8d;border-radius:3px;background:linear-gradient(#fbfbfb,#efefef 50%,#dedede);"></div>
<div class="a" style="left:941px;top:644px;width:132px;height:22px;border:1px solid #8d8d8d;border-radius:3px;background:linear-gradient(#fbfbfb,#efefef 50%,#dedede);"></div>
<span class="t" style="left:802.6px;top:650.59px;font-size:11px;color:#333;letter-spacing:0.902px;">Configurazione IPv6</span>
<span class="t" style="left:959px;top:650.59px;font-size:11px;color:#333;letter-spacing:0.916px;">Link Aggregation</span>
<div class="a" style="left:1130px;top:772px;width:96px;height:22px;border:1px solid #3b6c9c;border-radius:11px;background:linear-gradient(#eef6fd,#cfe4f8 50%,#a9cdef 51%,#b9d8f4);box-shadow:inset 0 1px 0 #fff;"></div>
<div class="a" style="left:1237px;top:772px;width:96px;height:22px;border:1px solid #3b6c9c;border-radius:11px;background:linear-gradient(#eef6fd,#cfe4f8 50%,#a9cdef 51%,#b9d8f4);box-shadow:inset 0 1px 0 #fff;"></div>
<span class="t" style="left:1157px;top:778.49px;font-size:11px;color:#1a1a1a;letter-spacing:0.787px;">Applica</span>
<span class="t" style="left:1264.5px;top:778.49px;font-size:11px;color:#1a1a1a;letter-spacing:0.749px;">Annulla</span>
<div class="a" style="left:1579px;top:234px;width:341px;height:758px;background:linear-gradient(100deg,#f1f4f9,#e8edf4 50%,#e3e8f0);border-left:1px solid #b9c2cf;border-top:1px solid #c9d1dc"></div>
<div class="a" style="left:1592px;top:286px;width:317px;height:137px;border:1px solid #56606e;border-radius:5px;background:linear-gradient(#fafafc,#ebecf1 35%,#d9dbe4 70%,#c5c8d5);"></div>
<div class="a" style="left:1592px;top:466px;width:317px;height:137px;border:1px solid #56606e;border-radius:5px;background:linear-gradient(#fafafc,#ebecf1 35%,#d9dbe4 70%,#c5c8d5);"></div>
<div class="a" style="left:1592px;top:646px;width:317px;height:137px;border:1px solid #56606e;border-radius:5px;background:linear-gradient(#fafafc,#ebecf1 35%,#d9dbe4 70%,#c5c8d5);"></div>
<div class="a" style="left:1592px;top:826px;width:317px;height:137px;border:1px solid #56606e;border-radius:5px;background:linear-gradient(#fafafc,#ebecf1 35%,#d9dbe4 70%,#c5c8d5);"></div>
<svg class="a" style="left:1597px;top:250px;" width="28" height="30" viewBox="0 0 28 30">
<defs><linearGradient id="sh" x1="0" y1="0" x2="1" y2="1"><stop offset="0" stop-color="#6a6a6a"/><stop offset=".5" stop-color="#3a3a3a"/><stop offset="1" stop-color="#0e0e0e"/></linearGradient></defs>
<path d="M2.5 5.5 Q14 -0.5 25.9 5.5 L25.9 15.5 Q25.5 23 14 28.7 Q2.5 23 2.5 15.5 Z" fill="url(#sh)" stroke="#1a1a1a" stroke-width="1.2"/>
<path d="M4.2 9.3 Q14 3.8 24.2 9.3" fill="none" stroke="#fff" stroke-width="1.6"/>
<rect x="7" y="13" width="14" height="5.2" fill="#fff"/><rect x="11.4" y="8.7" width="5.2" height="14" fill="#fff"/>
</svg>
<span class="t" style="left:1639.5px;top:257.90px;font-size:13px;color:#0f3d80;font-weight:bold;letter-spacing:0.348px;">Stato del sistema</span>
<svg class="a" style="left:1597px;top:435px;" width="28" height="21" viewBox="0 0 28 21">
<defs><linearGradient id="cb" x1="0" y1="0" x2="0" y2="1"><stop offset="0" stop-color="#6a6a6a"/><stop offset="1" stop-color="#111"/></linearGradient></defs>
<rect x="2" y="1" width="2" height="19" rx="1" fill="#333"/>
<rect x="6.3" y="4" width="4.4" height="16" rx="2" fill="url(#cb)"/>
<rect x="13" y="12" width="4.7" height="8" rx="2.2" fill="#151515"/>
<rect x="20.3" y="9" width="4.7" height="11" rx="2.2" fill="#151515"/>
<rect x="2" y="18.3" width="25.6" height="1.9" fill="#111"/>
</svg>
<span class="t" style="left:1639.5px;top:437.70px;font-size:13px;color:#0f3d80;font-weight:bold;letter-spacing:0.284px;">Controllo risorse</span>
<svg class="a" style="left:1599px;top:611px;" width="26" height="29" viewBox="0 0 26 29">
<path d="M2.6 1.6 L15.8 1.6 L23.4 9.4 L23.4 26.6 Q23.4 27.6 22.4 27.6 L3.6 27.6 Q2.6 27.6 2.6 26.6 Z" fill="#fff" stroke="#161616" stroke-width="2.6" stroke-linejoin="round"/>
<path d="M15.8 1.6 L15.8 9.4 L23.4 9.4" fill="none" stroke="#222" stroke-width="2"/>
<rect x="6.1" y="5.8" width="3.7" height="1.9" fill="#333"/><rect x="6.1" y="9.9" width="3.7" height="2.6" fill="#444"/>
<rect x="6.1" y="15.8" width="12.7" height="2.1" fill="#111"/><rect x="6.1" y="19.8" width="12.7" height="2.1" fill="#111"/>
</svg>
<span class="t" style="left:1639.5px;top:617.70px;font-size:13px;color:#0f3d80;font-weight:bold;letter-spacing:0.390px;">Registri recenti</span>
<svg class="a" style="left:1600px;top:794px;" width="26" height="26" viewBox="0 0 26 26">
<g transform="translate(12.5 12.5) rotate(45)" fill="none" stroke="#1a1a1a" stroke-width="2.5">
<rect x="-12.3" y="-3.1" width="8.8" height="6.2" rx="3.1"/>
<rect x="3.5" y="-3.1" width="8.8" height="6.2" rx="3.1"/>
<path d="M-5.5 0 L5.5 0" stroke-width="2.4"/>
</g>
</svg>
<span class="t" style="left:1639.4px;top:797.30px;font-size:13px;color:#0f3d80;font-weight:bold;letter-spacing:0.240px;">Connessioni correnti</span>
<svg class="a" style="left:1606px;top:315px;" width="80" height="80" viewBox="0 0 80 80">
<defs><radialGradient id="gk" cx=".5" cy=".35" r=".65"><stop offset="0" stop-color="#7ee07a"/><stop offset=".6" stop-color="#2fb42a"/><stop offset="1" stop-color="#17921a"/></radialGradient>
<radialGradient id="glow" cx=".5" cy=".5" r=".5"><stop offset=".7" stop-color="#8ee08a" stop-opacity=".6"/><stop offset="1" stop-color="#8ee08a" stop-opacity="0"/></radialGradient></defs>
<circle cx="39.6" cy="39.3" r="36" fill="url(#glow)"/>
<circle cx="39.6" cy="39.3" r="29" fill="url(#gk)"/>
<ellipse cx="39.6" cy="26" rx="19" ry="12" fill="#fff" opacity=".18"/>
<path d="M24.5 41 L36 51 L55.5 30.5" fill="none" stroke="#fff" stroke-width="6.5"/>
</svg>
<span class="t" style="left:1702px;top:313.06px;font-size:18px;color:#3a9c1c;letter-spacing:0.859px;">Buono</span>
<span class="t" style="left:1702px;top:337.24px;font-size:12px;color:#4a4a4a;letter-spacing:1.010px;">DiskStation funziona</span>
<span class="t" style="left:1702px;top:350.74px;font-size:12px;color:#4a4a4a;letter-spacing:1.248px;">correttamente.</span>
<span class="t" style="left:1702px;top:400.32px;font-size:12.5px;color:#111;letter-spacing:1.015px;">Tempo di attività: 00:11:57</span>
<svg class="a" style="left:1614px;top:479px;" width="25" height="92" viewBox="0 0 25 92"><rect x="0.5" y="0.5" width="24" height="91" fill="#17344f" stroke="#05101c"/>
<path d="M1 1 L24 1 L24 12 L1 80 Z" fill="#ffffff" opacity=".13"/>
<rect x="1" y="9" width="23" height="1" fill="#08131f"/><rect x="1" y="10" width="23" height="1" fill="#5b7790" opacity=".8"/><rect x="1" y="18" width="23" height="1" fill="#08131f"/><rect x="1" y="19" width="23" height="1" fill="#5b7790" opacity=".8"/><rect x="1" y="27" width="23" height="1" fill="#08131f"/><rect x="1" y="28" width="23" height="1" fill="#5b7790" opacity=".8"/><rect x="1" y="36" width="23" height="1" fill="#08131f"/><rect x="1" y="37" width="23" height="1" fill="#5b7790" opacity=".8"/><rect x="1" y="45" width="23" height="1" fill="#08131f"/><rect x="1" y="46" width="23" height="1" fill="#5b7790" opacity=".8"/><rect x="1" y="54" width="23" height="1" fill="#08131f"/><rect x="1" y="55" width="23" height="1" fill="#5b7790" opacity=".8"/><rect x="1" y="63" width="23" height="1" fill="#08131f"/><rect x="1" y="64" width="23" height="1" fill="#5b7790" opacity=".8"/><rect x="1" y="72" width="23" height="1" fill="#08131f"/><rect x="1" y="73" width="23" height="1" fill="#5b7790" opacity=".8"/><rect x="1" y="81" width="23" height="1" fill="#08131f"/><rect x="1" y="82" width="23" height="1" fill="#5b7790" opacity=".8"/></svg>
<svg class="a" style="left:1655px;top:479px;" width="25" height="92" viewBox="0 0 25 92"><rect x="0.5" y="0.5" width="24" height="91" fill="#17344f" stroke="#05101c"/>
<path d="M1 1 L24 1 L24 12 L1 80 Z" fill="#ffffff" opacity=".13"/>
<rect x="1" y="9" width="23" height="1" fill="#08131f"/><rect x="1" y="10" width="23" height="1" fill="#5b7790" opacity=".8"/><rect x="1" y="18" width="23" height="1" fill="#08131f"/><rect x="1" y="19" width="23" height="1" fill="#5b7790" opacity=".8"/><rect x="1" y="27" width="23" height="1" fill="#08131f"/><rect x="1" y="28" width="23" height="1" fill="#5b7790" opacity=".8"/><rect x="1" y="36" width="23" height="1" fill="#08131f"/><rect x="1" y="37" width="23" height="1" fill="#5b7790" opacity=".8"/><rect x="1" y="45" width="23" height="1" fill="#08131f"/><rect x="1" y="46" width="23" height="1" fill="#5b7790" opacity=".8"/><rect x="1" y="54" width="23" height="1" fill="#08131f"/><rect x="1" y="55" width="23" height="1" fill="#5b7790" opacity=".8"/><rect x="1" y="63" width="23" height="1" fill="#08131f"/><rect x="1" y="64" width="23" height="1" fill="#5b7790" opacity=".8"/><rect x="1" y="72" width="23" height="1" fill="#08131f"/><rect x="1" y="73" width="23" height="1" fill="#5b7790" opacity=".8"/><rect x="1" y="81" width="23" height="1" fill="#08131f"/><rect x="1" y="82" width="23" height="1" fill="#5b7790" opacity=".8"/></svg>
<div class="a" style="left:1616px;top:566px;width:21px;height:2px;background:#3f8fd8"></div>
<span class="t" style="left:1614.7px;top:579.34px;font-size:12px;color:#1b1b2b;letter-spacing:-0.372px;">CPU</span>
<span class="t" style="left:1655.5px;top:579.34px;font-size:12px;color:#1b1b2b;letter-spacing:-0.836px;">RAM</span>
<span class="t" style="left:1711.5px;top:480.06px;font-size:9.5px;color:#444;letter-spacing:1.270px;">100</span>
<span class="t" style="left:1717.6px;top:497.06px;font-size:9.5px;color:#444;letter-spacing:1.722px;">80</span>
<span class="t" style="left:1717.6px;top:515.01px;font-size:9.5px;color:#444;letter-spacing:1.722px;">60</span>
<span class="t" style="left:1717.6px;top:531.76px;font-size:9.5px;color:#444;letter-spacing:1.722px;">40</span>
<span class="t" style="left:1717.6px;top:550.16px;font-size:9.5px;color:#444;letter-spacing:1.722px;">20</span>
<span class="t" style="left:1724.2px;top:567.86px;font-size:9.5px;color:#444;">0</span>
<svg class="a" style="left:1731px;top:480px;" width="148" height="94" viewBox="0 0 148 94">
<defs><linearGradient id="gr" x1="0" y1="0" x2="1" y2="1"><stop offset="0" stop-color="#34546f"/><stop offset="1" stop-color="#1a3a58"/></linearGradient></defs>
<rect x="1" y="1" width="146" height="92" fill="#0d2d4b" stroke="#5a5f66" stroke-width="2"/>
<path d="M2 2 L146 2 L2 59 Z" fill="url(#gr)" opacity=".9"/>
<path d="M61 89 L70 88.5 L77 89 L81.7 83.5 L86 89 L95 89 L98.5 83.5 L102 89 L120 88.5 L146 88" fill="none" stroke="#2ad830" stroke-width="1.8"/>
<path d="M61 90 L75 89.5 L90 88.5 L95.5 89 L98.5 59.5 L102 89.5 L146 88.5" fill="none" stroke="#3d9ae0" stroke-width="2"/>
</svg>
<svg class="a" style="left:1728px;top:580px;" width="11" height="11" viewBox="0 0 11 11"><path d="M5.5 0 L10.5 5 L7.5 5 L7.5 10.5 L3.5 10.5 L3.5 5 L0.5 5 Z" fill="#2b8ee8" stroke="#0f5aa8" stroke-width=".6"/></svg>
<svg class="a" style="left:1780px;top:580px;" width="11" height="11" viewBox="0 0 11 11"><path d="M5.5 10.5 L10.5 5.5 L7.5 5.5 L7.5 0 L3.5 0 L3.5 5.5 L0.5 5.5 Z" fill="#3ed83a" stroke="#1a9a1a" stroke-width=".6"/></svg>
<span class="t" style="left:1740px;top:578.89px;font-size:11px;color:#1b1b2b;letter-spacing:1.119px;">1 KB/s</span>
<span class="t" style="left:1792.4px;top:578.89px;font-size:11px;color:#1b1b2b;letter-spacing:0.979px;">2 KB/s</span>
<div class="a" style="left:1647px;top:654px;width:253px;height:24px;background:#f1f2f6"></div>
<svg class="a" style="left:1654px;top:659px;" width="14" height="14" viewBox="0 0 14 14"><defs><radialGradient id="ri0" cx=".4" cy=".3" r=".8"><stop offset="0" stop-color="#a8d4ff"/><stop offset="1" stop-color="#1d5cc0"/></radialGradient></defs><circle cx="7" cy="7" r="6.5" fill="url(#ri0)"/><circle cx="7" cy="3.8" r="1.2" fill="#fff"/><path d="M7 5.8 L7 11" stroke="#fff" stroke-width="2"/></svg>
<span class="t" style="left:1682.5px;top:660.09px;font-size:11px;color:#1a1a1a;letter-spacing:0.853px;">Windows file service was started.</span>
<div class="a" style="left:1647px;top:678px;width:253px;height:24px;background:#dfe1e8"></div>
<svg class="a" style="left:1654px;top:683px;" width="14" height="14" viewBox="0 0 14 14"><defs><radialGradient id="ri1" cx=".4" cy=".3" r=".8"><stop offset="0" stop-color="#a8d4ff"/><stop offset="1" stop-color="#1d5cc0"/></radialGradient></defs><circle cx="7" cy="7" r="6.5" fill="url(#ri1)"/><circle cx="7" cy="3.8" r="1.2" fill="#fff"/><path d="M7 5.8 L7 11" stroke="#fff" stroke-width="2"/></svg>
<span class="t" style="left:1682.5px;top:684.11px;font-size:11px;color:#1a1a1a;letter-spacing:0.840px;">Windows file service was stopped.</span>
<div class="a" style="left:1647px;top:702px;width:253px;height:24px;background:#f3f4f8"></div>
<svg class="a" style="left:1654px;top:707px;" width="14" height="14" viewBox="0 0 14 14"><defs><radialGradient id="ri2" cx=".4" cy=".3" r=".8"><stop offset="0" stop-color="#a8d4ff"/><stop offset="1" stop-color="#1d5cc0"/></radialGradient></defs><circle cx="7" cy="7" r="6.5" fill="url(#ri2)"/><circle cx="7" cy="3.8" r="1.2" fill="#fff"/><path d="M7 5.8 L7 11" stroke="#fff" stroke-width="2"/></svg>
<span class="t" style="left:1682.5px;top:708.13px;font-size:11px;color:#1a1a1a;letter-spacing:0.843px;">Apple file service was started.</span>
<div class="a" style="left:1647px;top:726px;width:253px;height:24px;background:#dfe0e7"></div>
<svg class="a" style="left:1654px;top:731px;" width="14" height="14" viewBox="0 0 14 14"><defs><radialGradient id="ri3" cx=".4" cy=".3" r=".8"><stop offset="0" stop-color="#a8d4ff"/><stop offset="1" stop-color="#1d5cc0"/></radialGradient></defs><circle cx="7" cy="7" r="6.5" fill="url(#ri3)"/><circle cx="7" cy="3.8" r="1.2" fill="#fff"/><path d="M7 5.8 L7 11" stroke="#fff" stroke-width="2"/></svg>
<span class="t" style="left:1682.5px;top:732.15px;font-size:11px;color:#1a1a1a;letter-spacing:0.826px;">Apple file service was stopped.</span>
<div class="a" style="left:1647px;top:750px;width:253px;height:24px;background:#f4f5f9"></div>
<svg class="a" style="left:1654px;top:755px;" width="14" height="14" viewBox="0 0 14 14"><defs><radialGradient id="ri4" cx=".4" cy=".3" r=".8"><stop offset="0" stop-color="#a8d4ff"/><stop offset="1" stop-color="#1d5cc0"/></radialGradient></defs><circle cx="7" cy="7" r="6.5" fill="url(#ri4)"/><circle cx="7" cy="3.8" r="1.2" fill="#fff"/><path d="M7 5.8 L7 11" stroke="#fff" stroke-width="2"/></svg>
<span class="t" style="left:1682.5px;top:756.17px;font-size:11px;color:#1a1a1a;letter-spacing:0.945px;">Default gateway was changed from...</span>
<svg class="a" style="left:1614px;top:679px;" width="14" height="9" viewBox="0 0 14 9"><path d="M1.5 7.5 L7 2 L12.5 7.5" fill="none" stroke="#9a9a9a" stroke-width="2.6"/></svg>
<span class="t" style="left:1612.7px;top:705.59px;font-size:11px;color:#1b1b1b;letter-spacing:1.252px;">1/5</span>
<svg class="a" style="left:1614px;top:728.5px;" width="14" height="9" viewBox="0 0 14 9"><path d="M1.5 1.5 L7 7 L12.5 1.5" fill="none" stroke="#303030" stroke-width="2.6"/></svg>
<div class="a" style="left:1647px;top:859px;width:253px;height:96px;background:#fff"></div>
<svg class="a" style="left:1655px;top:839px;" width="13" height="14" viewBox="0 0 13 14"><circle cx="6.5" cy="4" r="3.6" fill="#333"/><path d="M0.5 13.5 Q1 8.5 6.5 8.5 Q12 8.5 12.5 13.5 Z" fill="#333"/></svg>
<span class="t" style="left:1671px;top:840.39px;font-size:11px;color:#1a1a1a;letter-spacing:1.183px;">admin</span>
<span class="t" style="left:1718px;top:840.39px;font-size:11px;color:#1a1a1a;letter-spacing:0.669px;">HTTP...</span>
<span class="t" style="left:1772.6px;top:840.39px;font-size:11px;color:#1a1a1a;letter-spacing:1.226px;">00:05:11</span>
<svg class="a" style="left:1874px;top:839px;" width="18" height="14" viewBox="0 0 18 14"><path d="M2 11 L6 7 M4 5 L9 10 L6 12 L2 8 Z M8 4 L11 1 M10 7 L13 4" stroke="#222" stroke-width="2" fill="#222"/><circle cx="13.5" cy="9.5" r="3.2" fill="#fff" stroke="#d02020" stroke-width="1.3"/><path d="M11.5 11.5 L15.5 7.5" stroke="#d02020" stroke-width="1.2"/></svg>
<svg class="a" style="left:1614px;top:860px;" width="14" height="9" viewBox="0 0 14 9"><path d="M1.5 7.5 L7 2 L12.5 7.5" fill="none" stroke="#a8a8a8" stroke-width="2.6"/></svg>
<span class="t" style="left:1612.7px;top:885.89px;font-size:11px;color:#1b1b1b;letter-spacing:1.152px;">1/1</span>
<svg class="a" style="left:1614px;top:909px;" width="14" height="9" viewBox="0 0 14 9"><path d="M1.5 1.5 L7 7 L12.5 1.5" fill="none" stroke="#a8a8a8" stroke-width="2.6"/></svg>
<svg class="a" style="left:1848px;top:970px;" width="72" height="22" viewBox="0 0 72 22"><path d="M3 22 L24 2 L72 2 L72 22 Z" fill="#f3f5f8" stroke="#c9cdd4" stroke-width="1"/><path d="M37 8 L44 14.5 L51 8" fill="none" stroke="#1e1e1e" stroke-width="3"/></svg>
<svg class="a" style="left:1630px;top:924px;" width="76" height="68" viewBox="0 0 76 68">
<defs><linearGradient id="wm" x1="0" y1="0" x2="0" y2="1"><stop offset="0" stop-color="#e6eefb"/><stop offset="1" stop-color="#7d9be0"/></linearGradient></defs>
<path d="M24 5 L70 13.5 Q73 14 72.5 17 L63.5 62 Q63 65 60 64.5 L8 46.5 Q5 45.5 6 42.5 L20.5 8 Q21.5 4.5 24 5 Z" fill="url(#wm)" fill-opacity=".75" stroke="#9aa2b0" stroke-opacity=".6" stroke-width="1.5"/>
<path d="M32 23 L45 46 M54 30 L24 42" stroke="#fff" stroke-opacity=".85" stroke-width="5" stroke-linecap="square"/>
</svg>
<span class="t" style="left:1702.8px;top:947.78px;font-size:24px;color:rgba(95,112,150,.55);transform:scaleX(0.797);transform-origin:0 0;text-shadow:0.6px 0 0 rgba(95,112,150,.35);">xtremehardware.com</span>
<div class="a" style="left:0px;top:990px;width:1579px;height:2px;background:#a2a7ad"></div>
</body></html>
